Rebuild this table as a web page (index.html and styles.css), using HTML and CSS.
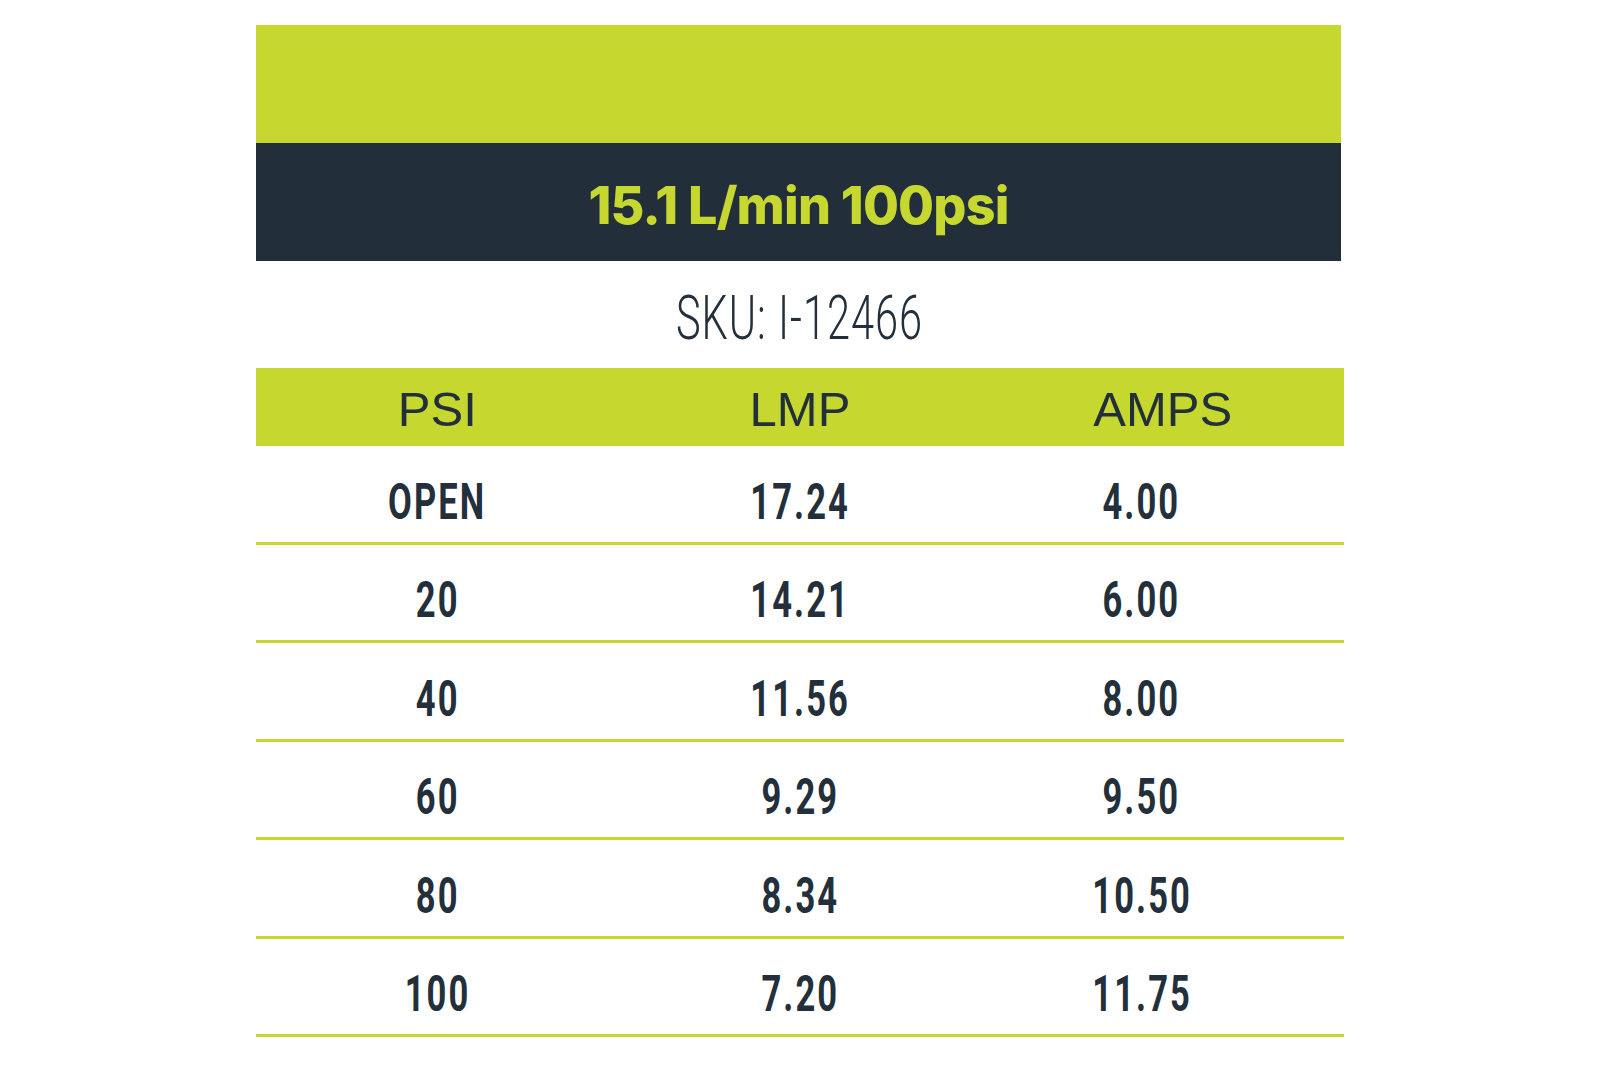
FILE: index.html
```html
<!DOCTYPE html>
<html>
<head>
<meta charset="utf-8">
<link rel="stylesheet" href="styles.css">
</head>
<body>
<div class="sheet">
  <div class="band band-green"></div>
  <div class="band band-dark"><span class="title">15.1 L/min 100psi</span></div>
  <div class="sku"><span class="sku-text">SKU: I-12466</span></div>
  <div class="row head">
    <div class="cell">PSI</div>
    <div class="cell">LMP</div>
    <div class="cell">AMPS</div>
  </div>
  <div class="row data">
    <div class="cell"><span class="num">OPEN</span></div>
    <div class="cell"><span class="num">17.24</span></div>
    <div class="cell c3"><span class="num">4.00</span></div>
  </div>
  <div class="row data">
    <div class="cell"><span class="num">20</span></div>
    <div class="cell"><span class="num">14.21</span></div>
    <div class="cell c3"><span class="num">6.00</span></div>
  </div>
  <div class="row data">
    <div class="cell"><span class="num">40</span></div>
    <div class="cell"><span class="num">11.56</span></div>
    <div class="cell c3"><span class="num">8.00</span></div>
  </div>
  <div class="row data">
    <div class="cell"><span class="num">60</span></div>
    <div class="cell"><span class="num">9.29</span></div>
    <div class="cell c3"><span class="num">9.50</span></div>
  </div>
  <div class="row data">
    <div class="cell"><span class="num">80</span></div>
    <div class="cell"><span class="num">8.34</span></div>
    <div class="cell c3"><span class="num">10.50</span></div>
  </div>
  <div class="row data">
    <div class="cell"><span class="num">100</span></div>
    <div class="cell"><span class="num">7.20</span></div>
    <div class="cell c3"><span class="num">11.75</span></div>
  </div>
</div>
</body>
</html>
```
FILE: styles.css
```css
html, body {
  margin: 0;
  padding: 0;
  background: #ffffff;
}
body {
  font-family: "Liberation Sans", Arial, sans-serif;
  color: #232f3b;
}
.sheet {
  width: 1088px;
  margin: 0 auto;
  padding-top: 25px;
}
.band {
  width: 1085px;
  height: 118px;
}
.band-green {
  background: #c6d730;
}
.band-dark {
  background: #232e3b;
  display: flex;
  justify-content: center;
  align-items: center;
}
.title {
  font-family: Inter, "Liberation Sans", sans-serif;
  font-weight: 800;
  font-size: 52px;
  letter-spacing: -0.8px;
  color: #c6d730;
  line-height: 1;
  padding-top: 8px;
}
.sku {
  height: 107px;
  display: flex;
  justify-content: center;
  align-items: center;
}
.sku-text {
  display: inline-block;
  font-family: Roboto, sans-serif;
  font-weight: 300;
  font-size: 62px;
  line-height: 1;
  letter-spacing: 1.5px;
  transform: scaleX(0.67);
  color: #232f3b;
  padding-top: 6px;
}
.row {
  display: grid;
  grid-template-columns: 1fr 1fr 1fr;
}
.head {
  background: #c6d730;
  height: 78px;
  align-items: center;
}
.head .cell {
  font-size: 49px;
  line-height: 1;
  text-align: center;
  padding-top: 5px;
}
.data {
  height: 95.5px;
  border-bottom: 3px solid #c6d730;
  align-items: center;
}
.data .cell {
  display: flex;
  justify-content: center;
  padding-top: 16px;
}
.data .c3 {
  padding-right: 42px;
}
.num {
  display: inline-block;
  font-family: Roboto, sans-serif;
  font-weight: 700;
  font-size: 50px;
  line-height: 1;
  letter-spacing: 3px;
  transform: scaleX(0.69);
  color: #232f3b;
}
```
